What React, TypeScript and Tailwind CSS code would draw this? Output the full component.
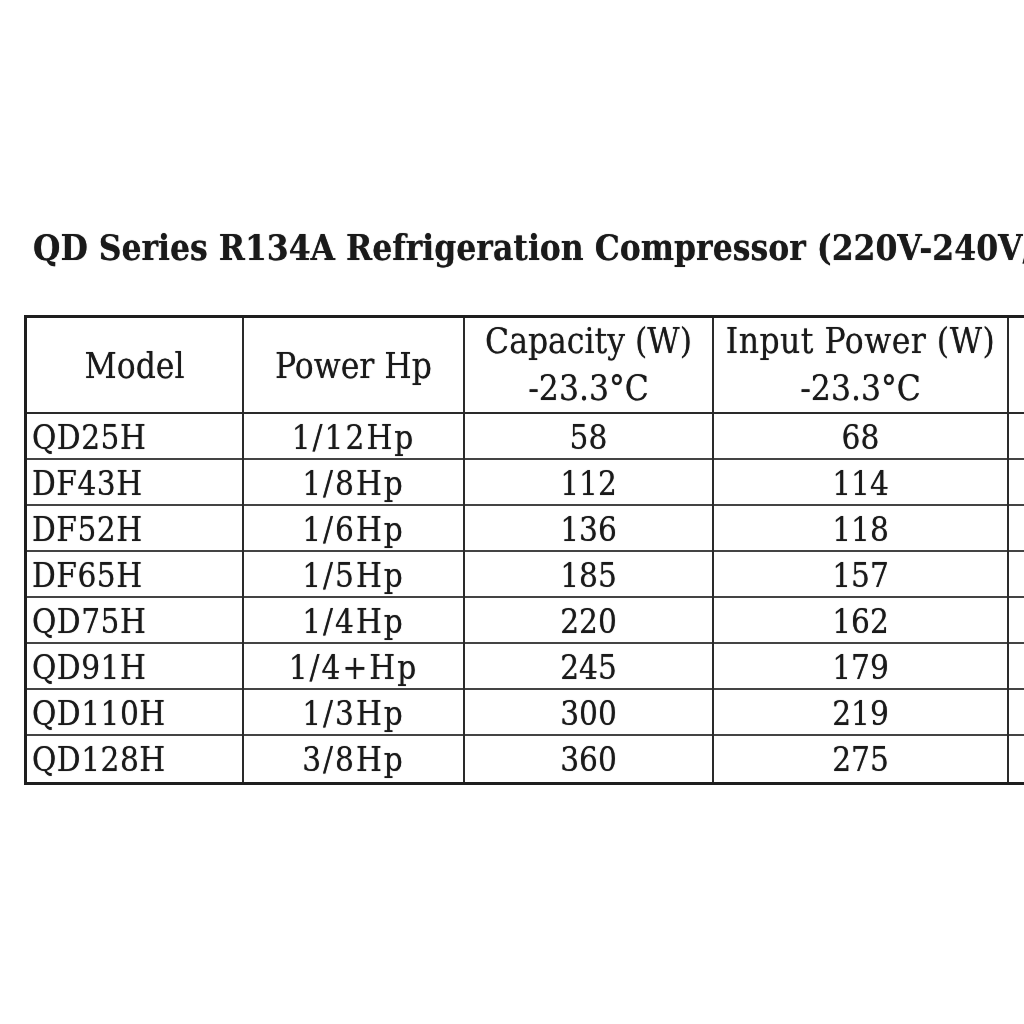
import React from "react";

const rows: [string, string, string, string][] = [
  ["QD25H", "1/12Hp", "58", "68"],
  ["DF43H", "1/8Hp", "112", "114"],
  ["DF52H", "1/6Hp", "136", "118"],
  ["DF65H", "1/5Hp", "185", "157"],
  ["QD75H", "1/4Hp", "220", "162"],
  ["QD91H", "1/4+Hp", "245", "179"],
  ["QD110H", "1/3Hp", "300", "219"],
  ["QD128H", "3/8Hp", "360", "275"],
];

const serif = { fontFamily: '"DejaVu Serif Condensed", "DejaVu Serif", serif' };

export default function App() {
  return (
    <div
      className="w-[1024px] h-[1024px] overflow-hidden bg-white text-[#1a1a1a] blur-[0.4px] [text-shadow:0_0_0.8px_rgba(0,0,0,0.7)]"
      style={serif}
    >
      <div className="pt-[226px] pl-[33px] whitespace-nowrap text-[35px] font-bold leading-[44px]">
        QD Series R134A Refrigeration Compressor (220V-240V/50Hz)
      </div>
      <div className="mt-[45px] ml-[24px] w-[1200px] border-[3px] border-[#1e1e1e] border-r-0">
        <div className="grid grid-cols-[217px_221px_249px_295px_1fr] h-[96px] border-b-2 border-[#2a2a2a] text-[35px]">
          <div className="border-r-2 border-[#2a2a2a] flex items-center justify-center">Model</div>
          <div className="border-r-2 border-[#2a2a2a] flex items-center justify-center">Power Hp</div>
          <div className="border-r-2 border-[#2a2a2a] flex flex-col items-center justify-center leading-[47px] pb-[2px]">
            <span>Capacity (W)</span>
            <span>-23.3°C</span>
          </div>
          <div className="border-r-2 border-[#2a2a2a] flex flex-col items-center justify-center leading-[47px] pb-[2px]">
            <span className="tracking-[0.5px]">Input Power (W)</span>
            <span>-23.3°C</span>
          </div>
          <div></div>
        </div>
        {rows.map((r, i) => (
          <div
            key={r[0]}
            className={
              i < rows.length - 1
                ? "grid grid-cols-[217px_221px_249px_295px_1fr] h-[46px] border-b-2 border-[#444] text-[33px] leading-[44px]"
                : "grid grid-cols-[217px_221px_249px_295px_1fr] h-[46px] text-[33px] leading-[44px]"
            }
          >
            <div className="border-r-2 border-[#2a2a2a] pl-[5px] pt-[2px] tracking-[0.5px]">{r[0]}</div>
            <div className="border-r-2 border-[#2a2a2a] text-center pt-[2px] tracking-[2px]">{r[1]}</div>
            <div className="border-r-2 border-[#2a2a2a] text-center pt-[2px]">{r[2]}</div>
            <div className="border-r-2 border-[#2a2a2a] text-center pt-[2px]">{r[3]}</div>
            <div></div>
          </div>
        ))}
      </div>
    </div>
  );
}
